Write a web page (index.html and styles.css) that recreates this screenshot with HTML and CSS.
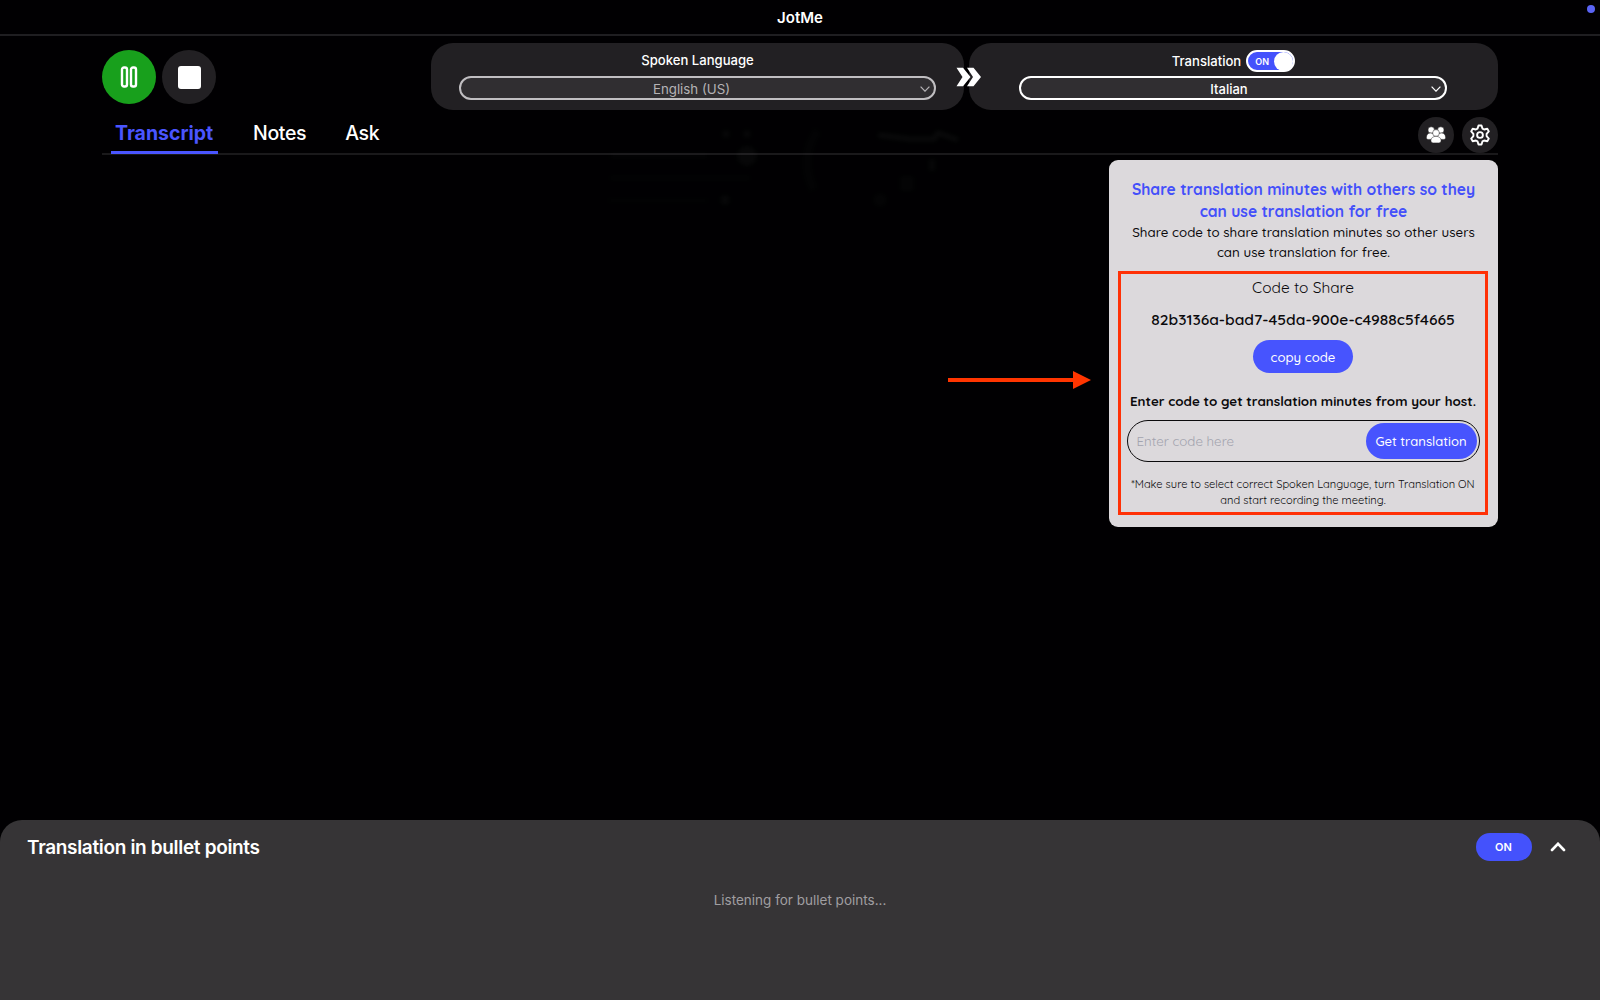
FILE: index.html
```
<!DOCTYPE html>
<html lang="en">
<head>
  <meta charset="UTF-8" />
  <meta name="viewport" content="width=device-width, initial-scale=1.0" />
  <title>JotMe</title>
  <link rel="stylesheet" href="styles.css">
</head>
<body>
  <header class="titlebar">
    <span>JotMe</span>
    <i class="status-dot"></i>
  </header>

  <main class="main-content">
    <!-- faint shapes of the window behind -->
    <svg class="backdrop" width="400" height="120" viewBox="0 0 400 120" fill="#fff" stroke="#fff">
      <g opacity=".03" stroke="none">
        <circle cx="136" cy="24" r="4"/>
        <circle cx="157" cy="24" r="4"/>
        <circle cx="157" cy="46" r="10"/>
        <rect x="18" y="89" width="100" height="3" opacity=".6"/>
        <circle cx="135" cy="90" r="5"/>
        <rect x="20" y="66" width="140" height="4" opacity=".5"/>
        <rect x="20" y="43" width="98" height="5" opacity=".5"/>
        <circle cx="290" cy="90" r="7" opacity=".5"/>
        <rect x="339" y="49" width="6" height="12"/>
        <path d="M310 67h14v3h-14zM310 72h14v3h-14zM310 77h14v3h-14z"/>
      </g>
      <path d="M288 25l32 4h24l4-6 20 7" fill="none" stroke-width="5" opacity=".04"/>
      <path d="M228 20c-14 20-14 40-4 60" fill="none" stroke-width="10" opacity=".012"/>
    </svg>

    <div class="toolbar">
      <div class="record-controls">
        <button class="round-button pause" aria-label="Pause">
          <svg width="18" height="22" viewBox="0 0 18 22" fill="none" stroke="#fff" stroke-width="2.400">
            <rect x="2" y="1.500" width="5" height="19" rx="2"/>
            <rect x="11" y="1.500" width="5" height="19" rx="2"/>
          </svg>
        </button>
        <button class="round-button stop" aria-label="Stop"><i class="stop-icon"></i></button>
      </div>
      <div class="languages">
        <div class="language-card spoken">
          <div class="language-label">Spoken Language</div>
          <div class="select disabled">
            <span>English (US)</span>
            <svg width="10" height="6" viewBox="0 0 10 6" fill="none" stroke="currentColor" stroke-width="1.2"><path d="M.6.6 5 5.2 9.4.6"/></svg>
          </div>
        </div>
        <svg class="double-arrow" width="26" height="20" viewBox="0 0 26 20" fill="#fff">
          <path d="M.5.800h6.500l7.500 9.200-7.500 9.200H.5L6.500 10z"/>
          <path d="M11 .800h6.500L25 10l-7.500 9.200H11L17 10z"/>
        </svg>
        <div class="language-card translated">
          <div class="language-label">Translation
            <span class="toggle">ON<i></i></span>
          </div>
          <div class="select">
            <span>Italian</span>
            <svg width="10" height="6" viewBox="0 0 10 6" fill="none" stroke="currentColor" stroke-width="1.2"><path d="M.6.6 5 5.2 9.4.6"/></svg>
          </div>
        </div>
      </div>
    </div>

    <nav class="tabs">
      <a class="tab active">Transcript</a>
      <a class="tab notes">Notes</a>
      <a class="tab ask">Ask</a>
      <div class="tab-actions">
        <button class="icon-button" aria-label="Share">
          <svg width="20" height="18" viewBox="0 0 20 18" fill="#fff" stroke="#222023" stroke-width=".5">
            <circle cx="5.200" cy="4" r="3.200"/>
            <circle cx="14.800" cy="4" r="3.200"/>
            <path d="M.4 11.500C.4 8.800 2 7 4.500 7S9 9 9 11.500c0 1.200-.8 1.900-2 1.900H2.200C1 13.400.4 12.700.4 11.500z"/>
            <path d="M19.600 11.500c0-2.700-1.600-4.500-4.100-4.500S11 9 11 11.500c0 1.200.8 1.900 2 1.900h4.800c1.200 0 1.800-.7 1.800-1.900z"/>
            <circle cx="10" cy="7" r="3.400"/>
            <path d="M4.900 14.600c0-2.600 2.200-4.300 5.100-4.300s5.100 1.700 5.100 4.300c0 1.400-1 2.300-2.400 2.300H7.300c-1.400 0-2.400-.9-2.400-2.300z"/>
          </svg>
        </button>
        <button class="icon-button" aria-label="Settings">
          <svg width="20" height="22" viewBox="0 0 20 22" fill="none" stroke="#fff" stroke-width="1.900" stroke-linejoin="round">
            <path d="M8.500 1.500h3l1 3.100 1.600.9 3.200-.7 1.500 2.600-2.200 2.500v2.200l2.200 2.500-1.500 2.600-3.200-.7-1.600.9-1 3.100h-3l-1-3.100-1.600-.9-3.200.7-1.500-2.600 2.200-2.500V9.900L1.200 7.400l1.500-2.600 3.200.7 1.600-.9z"/>
            <circle cx="10" cy="11" r="2.900"/>
          </svg>
        </button>
      </div>
    </nav>

    <section class="share-area">
      <svg class="pointer-arrow" width="143" height="18" viewBox="0 0 143 18" fill="#ff3500">
        <path d="M0 7h125V0l18 9-18 9v-7H0z"/>
      </svg>
      <div class="share-popup">
        <h2 class="share-title">Share translation minutes with others so they<br>can use translation for free</h2>
        <p class="share-text">Share code to share translation minutes so other users<br>can use translation for free.</p>
        <div class="share-box">
          <div class="code-label">Code to Share</div>
          <div class="code">82b3136a-bad7-45da-900e-c4988c5f4665</div>
          <button class="copy-button">copy code</button>
          <div class="enter-label">Enter code to get translation minutes from your host.</div>
          <div class="code-field">
            <span class="placeholder">Enter code here</span>
            <button class="get-button">Get translation</button>
          </div>
          <p class="note">*Make sure to select correct Spoken Language, turn Translation ON<br>and start recording the meeting.</p>
        </div>
      </div>
    </section>
  </main>

  <footer class="bullet-panel">
    <div class="bullet-header">
      <h3>Translation in bullet points</h3>
      <button class="on-button">ON</button>
      <svg width="16" height="11" viewBox="0 0 16 11" fill="none" stroke="#fff" stroke-width="2.600" stroke-linecap="round"><path d="M2 8 8 1.800 14 8"/></svg>
    </div>
    <p class="listening">Listening for bullet points...</p>
  </footer>
</body>
</html>
```

FILE: styles.css
```
* {
  box-sizing: border-box;
}
body {
  margin: 0;
  height: 100vh;
  display: flex;
  flex-direction: column;
  background: #010002;
  color: #fff;
  font-family: Inter, "Liberation Sans", sans-serif;
  overflow: hidden;
}
button {
  border: none;
  padding: 0;
  color: #fff;
  font-family: inherit;
  display: flex;
  align-items: center;
  justify-content: center;
}
.titlebar {
  position: relative;
  height: 36px;
  flex: none;
  border-bottom: 2px solid #1f1e21;
  text-align: center;
  font-size: 15px;
  font-weight: 600;
  line-height: 35px;
}
.status-dot {
  position: absolute;
  right: 5px;
  top: 5px;
  width: 8px;
  height: 8px;
  border-radius: 50%;
  background: #5a64f5;
}
.main-content {
  position: relative;
  flex: 1;
  width: 1396px;
  margin: 0 auto;
}
.backdrop {
  position: absolute;
  left: 488px;
  top: 74px;
  filter: blur(2px);
}
.toolbar {
  display: flex;
  justify-content: space-between;
  padding-top: 7px;
}
.record-controls {
  display: flex;
  gap: 6px;
  padding-top: 7px;
}
.round-button {
  width: 54px;
  height: 54px;
  border-radius: 50%;
  background: #222023;
}
.round-button.pause {
  background: #18a01c;
}
.stop-icon {
  width: 23px;
  height: 23px;
  border-radius: 3px;
  background: #fff;
}
.languages {
  position: relative;
  display: flex;
  gap: 5px;
}
.language-card {
  height: 67px;
  border-radius: 22px;
  background: #222023;
}
.language-card.spoken {
  width: 533px;
  padding: 0 28px;
}
.language-card.translated {
  width: 529px;
  padding: 0 51px 0 50px;
}
.language-label {
  height: 33px;
  display: flex;
  align-items: center;
  justify-content: center;
  gap: 5px;
  font-size: 13.1px;
  font-weight: 500;
}
.translated .language-label {
  padding: 3px 0 0 1px;
}
.select {
  height: 24px;
  display: flex;
  align-items: center;
  padding: 1px 4px 0 6px;
  border: 2px solid #fff;
  border-radius: 12px;
  background: #302e31;
  font-size: 13px;
  font-weight: 500;
}
.select span {
  flex: 1;
  text-align: center;
}
.select.disabled {
  padding-left: 2px;
  border-color: #c0bec1;
  color: #b5b3b6;
  font-size: 13.3px;
  font-weight: 400;
}
.double-arrow {
  position: absolute;
  left: 525px;
  top: 24px;
}
.toggle {
  width: 49px;
  height: 22px;
  display: flex;
  align-items: center;
  justify-content: space-between;
  padding-left: 7px;
  border: 2px solid #fff;
  border-radius: 11px;
  background: #4452fc;
  font-size: 9px;
  font-weight: 600;
}
.toggle i {
  width: 19px;
  height: 19px;
  border-radius: 50%;
  background: #fff;
}
.tabs {
  height: 45px;
  display: flex;
  align-items: flex-end;
  padding-left: 9px;
  border-bottom: 2px solid #1a191b;
}
.tab {
  height: 36px;
  padding: 0 5px;
  margin-bottom: -1px;
  font-size: 19.5px;
  font-weight: 500;
  line-height: 31px;
  letter-spacing: -0.35px;
}
.tab.active {
  width: 107px;
  padding: 0 4px;
  color: #4a55ff;
  font-weight: 700;
  letter-spacing: 0;
  border-bottom: 3px solid #4a55ff;
}
.tab.notes {
  margin-left: 30px;
}
.tab.ask {
  margin-left: 29px;
}
.tab-actions {
  display: flex;
  gap: 8px;
  margin-left: auto;
}
.icon-button {
  width: 36px;
  height: 36px;
  border-radius: 50%;
  background: #222023;
}
.share-area {
  display: flex;
  justify-content: flex-end;
  align-items: flex-start;
  gap: 18px;
  padding-top: 5px;
}
.pointer-arrow {
  margin-top: 211px;
}
.share-popup {
  width: 389px;
  height: 367px;
  padding: 18px 9px 0;
  border-radius: 9px;
  background: #dcd9dc;
  color: #0b0a0c;
  font-family: Quicksand, Lato, sans-serif;
  text-align: center;
  white-space: nowrap;
}
.share-title {
  margin: 0;
  color: #4450fa;
  font-size: 15.6px;
  font-weight: 700;
  line-height: 22px;
}
.share-text {
  margin: 0;
  font-size: 13.35px;
  font-weight: 500;
  line-height: 20px;
}
.share-box {
  display: flex;
  flex-direction: column;
  align-items: center;
  width: 370px;
  height: 244px;
  margin-top: 9px;
  padding: 2px 6px;
  border: 3px solid #ff3106;
}
.code-label {
  font-size: 15.5px;
  line-height: 22px;
}
.code {
  margin-top: 10px;
  font-size: 15.55px;
  font-weight: 600;
  line-height: 22px;
}
.copy-button {
  width: 100px;
  height: 33px;
  margin-top: 10px;
  border-radius: 17px;
  background: #4754fe;
  font-size: 13.2px;
  font-weight: 500;
}
.enter-label {
  margin-top: 18px;
  font-size: 13.35px;
  font-weight: 700;
  line-height: 20px;
}
.code-field {
  display: flex;
  align-items: center;
  width: 353px;
  height: 42px;
  flex: none;
  margin-top: 9px;
  padding: 0 2px 0 9px;
  border: 1px solid #0b0a0c;
  border-radius: 21px;
}
.placeholder {
  flex: 1;
  color: #a2a3ae;
  font-size: 13.3px;
  text-align: left;
}
.get-button {
  width: 111px;
  height: 36px;
  border-radius: 18px;
  background: #4754fe;
  font-size: 13.1px;
  font-weight: 500;
}
.note {
  margin: 14px 0 0;
  font-size: 11.1px;
  line-height: 16px;
}
.bullet-panel {
  height: 180px;
  flex: none;
  padding: 13px 34px 0 27px;
  border-radius: 22px 22px 0 0;
  background: #363436;
}
.bullet-header {
  display: flex;
  align-items: center;
}
.bullet-header h3 {
  margin: 0 auto 0 0;
  font-size: 19px;
  font-weight: 600;
  letter-spacing: -0.33px;
}
.on-button {
  width: 56px;
  height: 28px;
  margin-right: 18.5px;
  border-radius: 14px;
  background: #4452fc;
  font-size: 11px;
  font-weight: 600;
}
.listening {
  margin: 31px -7px 0 0;
  color: #a09ea1;
  font-size: 13.5px;
  line-height: 17px;
  text-align: center;
}
```
